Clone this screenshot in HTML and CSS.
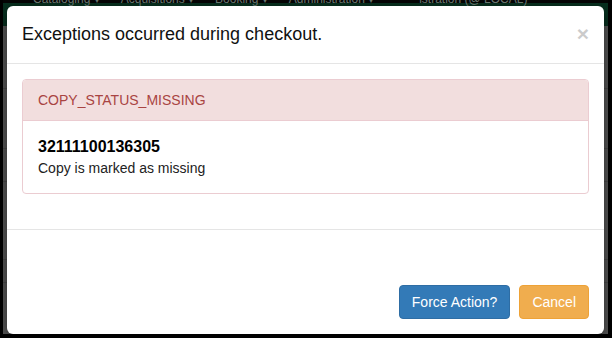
FILE: index.html
```html
<!DOCTYPE html>
<html>
<head>
<meta charset="utf-8">
<link rel="stylesheet" href="styles.css">
</head>
<body>
<div class="screen">
  <div class="navbar">
    <span class="nav-item">Cataloging ▾</span>
    <span class="nav-item">Acquisitions ▾</span>
    <span class="nav-item">Booking ▾</span>
    <span class="nav-item">Administration ▾</span>
    <span class="nav-item nav-user">istration (@ LOCAL)</span>
  </div>
  <div class="page"></div>
  <div class="modal">
    <div class="modal-header">
      <h4 class="modal-title">Exceptions occurred during checkout.</h4>
      <span class="close">×</span>
    </div>
    <div class="modal-body">
      <div class="panel">
        <div class="panel-heading">COPY_STATUS_MISSING</div>
        <div class="panel-body">
          <div class="barcode">32111100136305</div>
          <div class="desc">Copy is marked as missing</div>
        </div>
      </div>
    </div>
    <div class="modal-footer">
      <button class="btn btn-primary">Force Action?</button>
      <button class="btn btn-warning">Cancel</button>
    </div>
  </div>
</div>
</body>
</html>
```
FILE: styles.css
```css
* { box-sizing: border-box; }
html, body { margin: 0; padding: 0; background: #000; overflow: hidden; }
body { font-family: "Liberation Sans", Arial, sans-serif; font-size: 14px; color: #333; }

.screen {
  position: relative;
  width: 612px;
  height: 338px;
  border-left: 3px solid #000;
  border-right: 4px solid #000;
  border-bottom: 4px solid #000;
  background: #545454;
  display: flex;
  flex-direction: column;
  overflow: hidden;
}

.navbar {
  height: 26px;
  background: linear-gradient(#050505 0 3px, #07301f 3px);
  display: flex;
  gap: 21px;
  padding-left: 30px;
  font-size: 12px;
  line-height: 12px;
  color: #6f7c76;
  white-space: nowrap;
}
.nav-item { margin-top: -7px; }
.nav-user { margin-left: 24px; }

.page {
  flex: 1;
  background:
    linear-gradient(#4a4a4a, #4a4a4a) 0 62px / 100% 1px no-repeat,
    linear-gradient(#4a4a4a, #4a4a4a) 0 122px / 100% 1px no-repeat,
    linear-gradient(#4a4a4a, #4a4a4a) 0 155px / 100% 1px no-repeat,
    linear-gradient(#4a4a4a, #4a4a4a) 0 233px / 100% 1px no-repeat,
    linear-gradient(#4a4a4a, #4a4a4a) 0 256px / 100% 1px no-repeat,
    #575757;
}

.modal {
  position: absolute;
  left: 4px;
  top: 6px;
  width: 597px;
  height: 328px;
  background: #fff;
  border-radius: 6px;
  box-shadow: 0 5px 15px rgba(0,0,0,.5);
  display: flex;
  flex-direction: column;
}

.modal-header {
  display: flex;
  justify-content: space-between;
  align-items: flex-start;
  padding: 15px;
  border-bottom: 1px solid #e5e5e5;
}
.modal-title {
  margin: 0;
  font-size: 18px;
  font-weight: normal;
  line-height: 26.5px;
  color: #111;
}
.close {
  font-size: 21px;
  font-weight: bold;
  line-height: 1;
  color: #000;
  opacity: .2;
  margin-top: 2px;
}

.modal-body { padding: 15px; }

.panel {
  margin-bottom: 20px;
  border: 1px solid #ebccd1;
  border-radius: 4px;
  background: #fff;
}
.panel-heading {
  padding: 10px 15px;
  line-height: 20px;
  background: #f2dede;
  color: #a94442;
  border-bottom: 1px solid #ebccd1;
  border-radius: 3px 3px 0 0;
}
.panel-body { padding: 15px; }
.barcode {
  font-size: 16px;
  font-weight: bold;
  line-height: 22px;
  color: #000;
}
.desc { line-height: 20px; color: #222; }

.modal-footer {
  flex: 1;
  border-top: 1px solid #e5e5e5;
  padding: 55px 15px 15px;
  display: flex;
  justify-content: flex-end;
  align-items: flex-start;
  gap: 9px;
}
.btn {
  font-family: inherit;
  font-size: 14px;
  line-height: 20px;
  padding: 6px 12px;
  border: 1px solid transparent;
  border-radius: 4px;
  color: #fff;
  margin: 0;
}
.btn-primary { background: #337ab7; border-color: #2e6da4; }
.btn-warning { background: #f0ad4e; border-color: #eea236; }
```
